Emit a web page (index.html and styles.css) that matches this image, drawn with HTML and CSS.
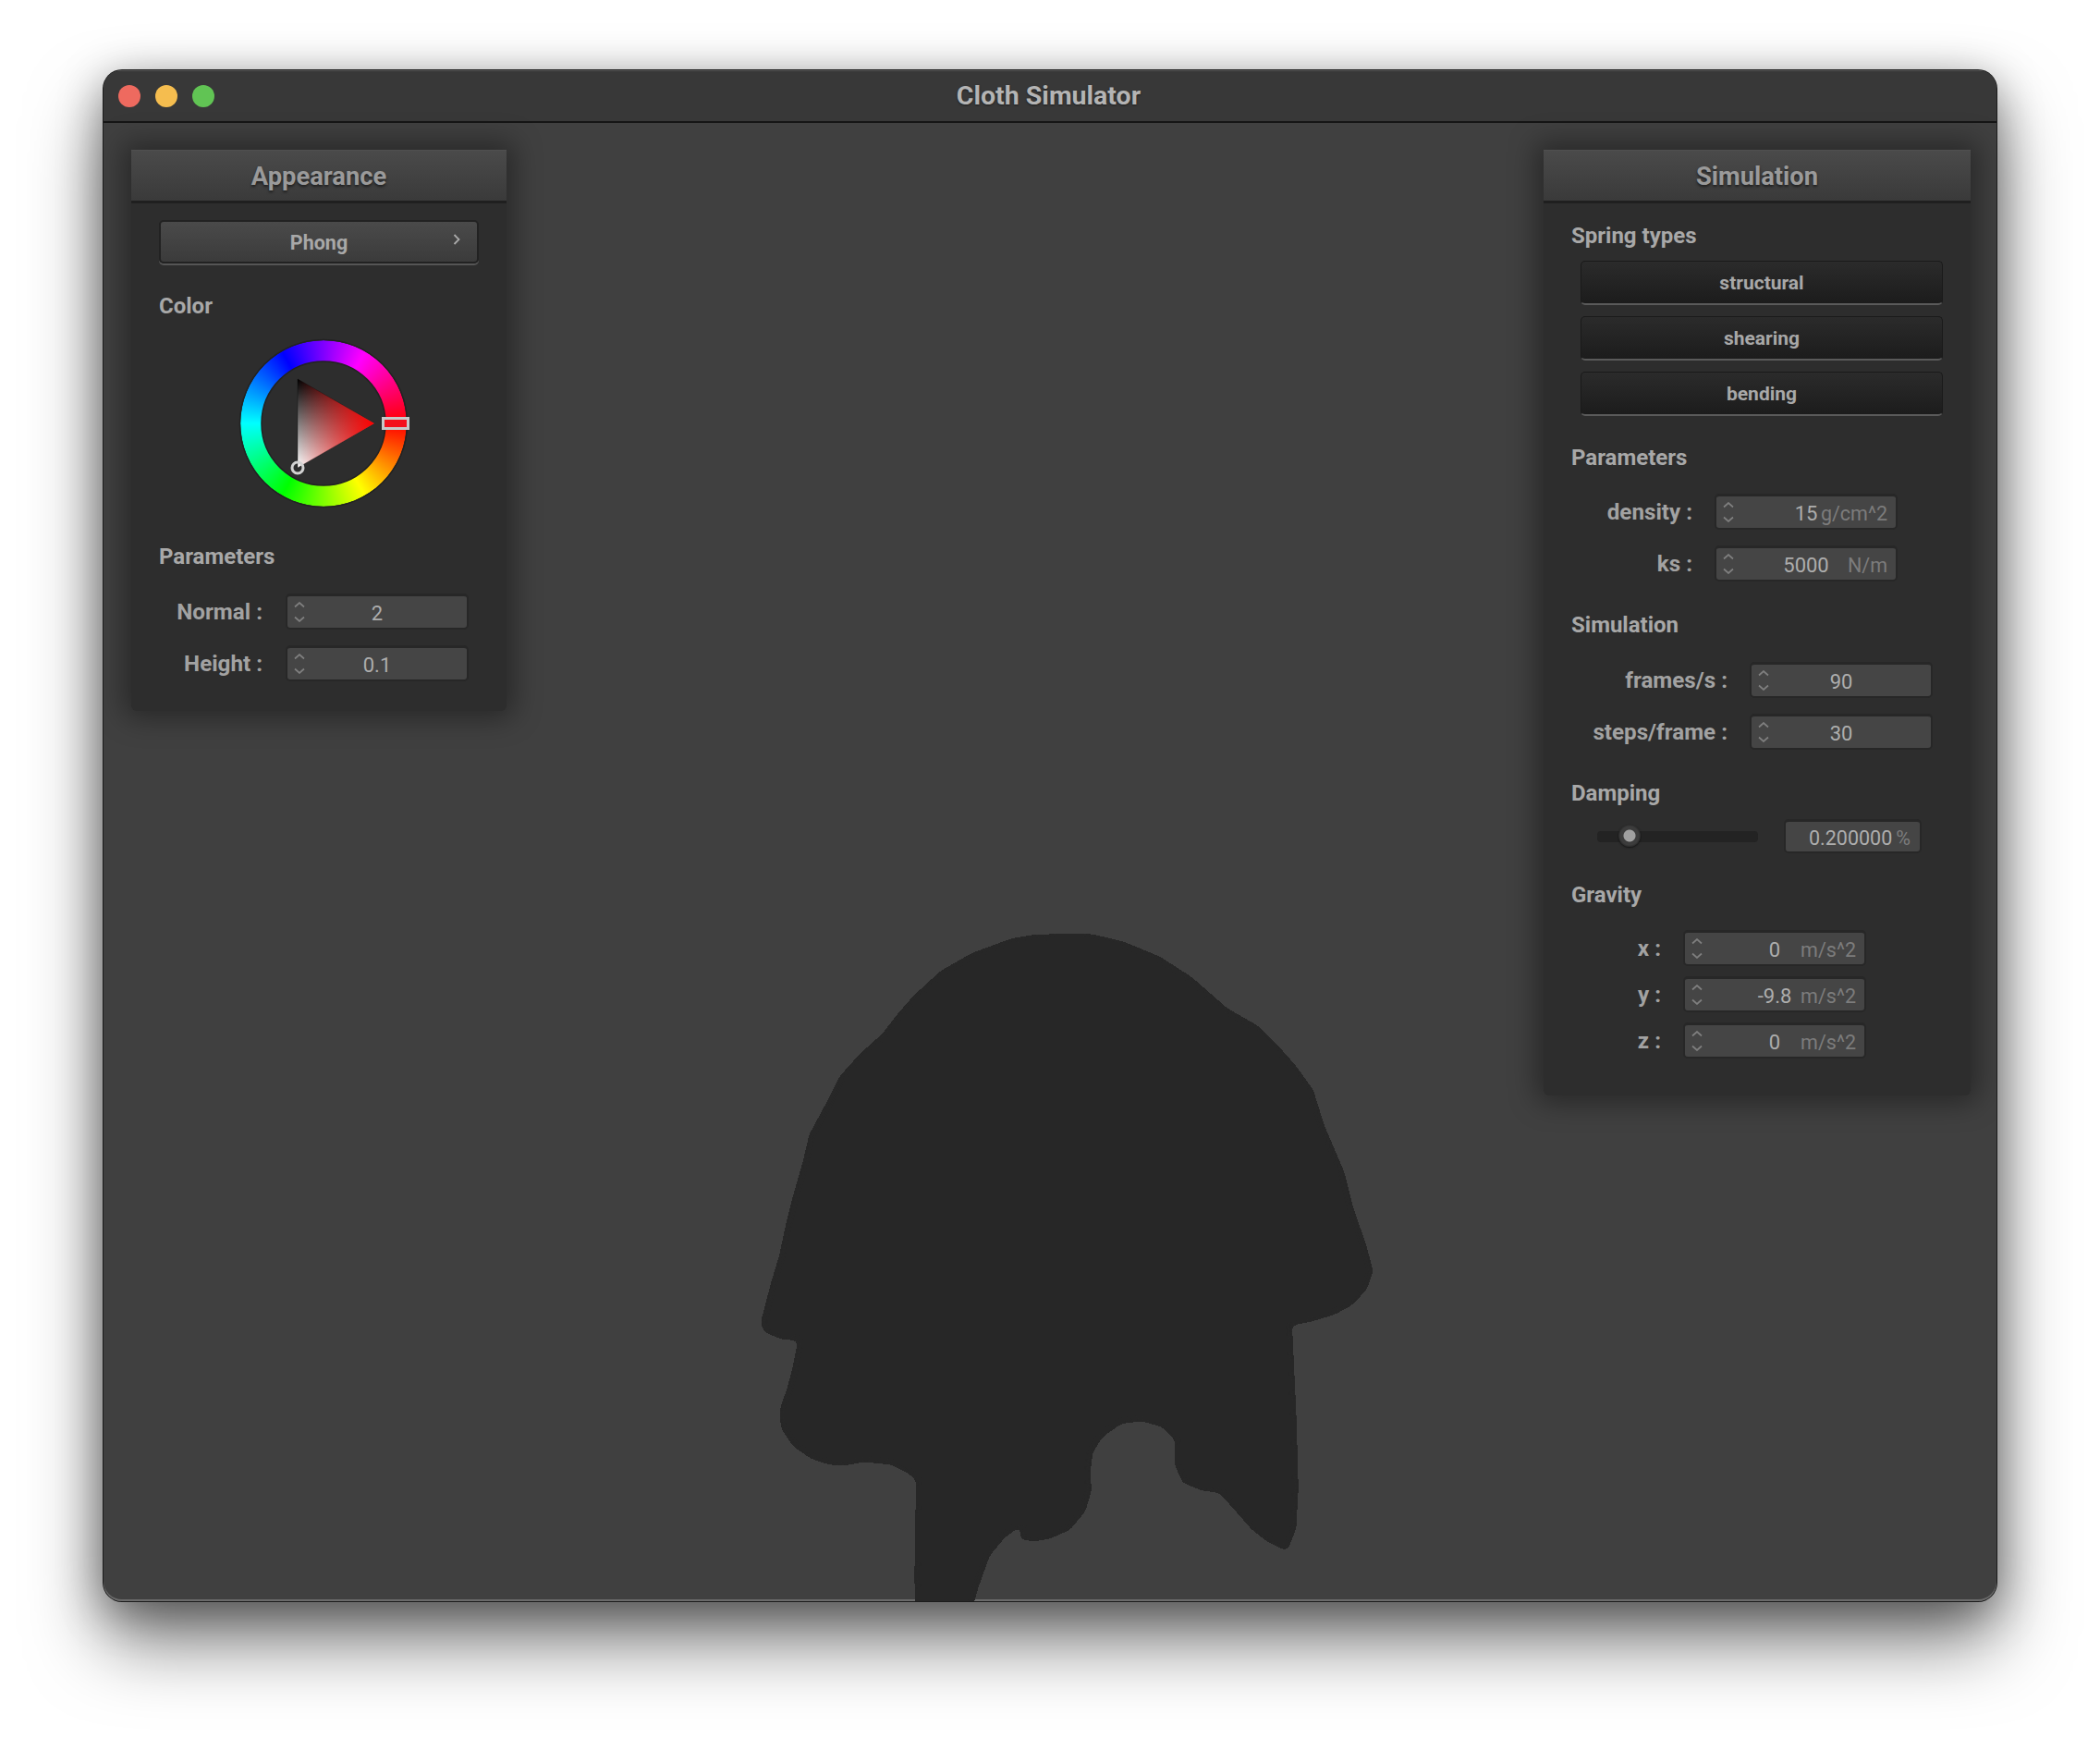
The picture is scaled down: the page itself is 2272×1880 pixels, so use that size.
FILE: index.html
```html
<!DOCTYPE html>
<html lang="en">
<head>
<meta charset="utf-8">
<title>Cloth Simulator</title>
<link rel="stylesheet" href="styles.css">
</head>
<body>
<svg class="defs" width="0" height="0" aria-hidden="true">
  <symbol id="spin" viewBox="0 0 12 22">
    <path d="M1 5.500 L6 1 L11 5.500 M1 16.500 L6 21 L11 16.500" fill="none" stroke="#7f7f7f" stroke-width="1.7"/>
  </symbol>
  <filter id="smooth" x="0" y="0" width="1" height="1" color-interpolation-filters="sRGB">
    <feGaussianBlur stdDeviation="7"/>
    <feComponentTransfer><feFuncA type="discrete" tableValues="0 1"/></feComponentTransfer>
  </filter>
</svg>
<main class="window">
  <header class="titlebar">
    <div class="lights">
      <span class="light red"></span>
      <span class="light yellow"></span>
      <span class="light green"></span>
    </div>
    <h1 class="app-title">Cloth Simulator</h1>
  </header>
  <div class="canvas">
    <svg class="cloth" viewBox="0 0 1568 1568" shape-rendering="crispEdges" aria-hidden="true">
      <path fill="#272727" filter="url(#smooth)" d="M760 62 L700 64 L650 72 L560 105 L490 145 L430 200 L395 240 L360 285 L310 330 L265 380 L232 445 L197 510 L183 570 L160 650 L145 710 L130 780 L112 840 L100 885 L88 932 L98 952 L135 967 L172 970 L160 1030 L148 1075 L131 1125 L134 1165 L160 1205 L200 1233 L240 1247 L280 1248 L320 1241 L380 1247 L420 1268 L436 1282 L433 1400 L432 1500 L435 1640 L540 1640 L575 1520 L600 1450 L635 1408 L670 1384 L668 1414 L700 1418 L735 1412 L780 1392 L814 1350 L827 1305 L825 1260 L830 1220 L852 1185 L895 1155 L940 1150 L985 1163 L1012 1190 L1012 1245 L1030 1287 L1075 1305 L1113 1310 L1185 1392 L1220 1419 L1264 1440 L1284 1390 L1289 1300 L1285 1150 L1275 936 L1320 927 L1370 912 L1410 890 L1442 855 L1456 815 L1440 755 L1412 675 L1392 595 L1347 490 L1322 410 L1282 355 L1242 310 L1200 268 L1130 228 L1050 158 L980 113 L900 80 L830 63 Z"/>
    </svg>

    <section class="panel panel-appearance">
      <h2 class="panel-title">Appearance</h2>
      <div class="panel-body body-appearance">
        <button class="combo">Phong
          <svg class="combo-arrow" viewBox="0 0 8 12" aria-hidden="true"><path d="M1.500 1 L6.500 6 L1.500 11" fill="none" stroke="#ababab" stroke-width="1.800"/></svg>
        </button>
        <h3 class="group-title gt-color">Color</h3>
        <div class="wheel">
          <div class="hue"></div>
          <svg class="wheel-marks" viewBox="0 0 180 180" aria-hidden="true">
            <defs>
              <linearGradient id="bw" x1="0" y1="0" x2="0" y2="1">
                <stop offset="0" stop-color="#000"/><stop offset="1" stop-color="#fff"/>
              </linearGradient>
              <linearGradient id="rd" x1="0" y1="0" x2="1" y2="0">
                <stop offset="0" stop-color="#ff0000" stop-opacity="0"/><stop offset="1" stop-color="#ff0000"/>
              </linearGradient>
            </defs>
            <circle cx="90" cy="90" r="90.500" fill="none" stroke="#222" stroke-width="1.500"/>
            <circle cx="90" cy="90" r="67" fill="none" stroke="#222" stroke-width="1.500"/>
            <path d="M62 42 L145 90 L62 138 Z" fill="url(#bw)" stroke="#000" stroke-opacity=".3"/>
            <path d="M62 42 L145 90 L62 138 Z" fill="url(#rd)"/>
            <rect x="154.500" y="84.500" width="27" height="11" fill="#f4101c" stroke="#c8c8c8" stroke-width="3"/>
            <circle cx="62" cy="138" r="6" fill="none" stroke="#d2d2d2" stroke-width="3"/>
          </svg>
        </div>
        <h3 class="group-title gt-app-params">Parameters</h3>
        <div class="rows rows-app">
          <div class="row"><span class="row-label">Normal :</span><div class="field"><svg class="spin"><use href="#spin"/></svg><span class="value">2</span></div></div>
          <div class="row"><span class="row-label">Height :</span><div class="field"><svg class="spin"><use href="#spin"/></svg><span class="value">0.1</span></div></div>
        </div>
      </div>
    </section>

    <section class="panel panel-simulation">
      <h2 class="panel-title">Simulation</h2>
      <div class="panel-body body-simulation">
        <h3 class="group-title">Spring types</h3>
        <div class="buttons">
          <button class="toggle">structural</button>
          <button class="toggle">shearing</button>
          <button class="toggle">bending</button>
        </div>
        <h3 class="group-title gt-params">Parameters</h3>
        <div class="rows rows-params">
          <div class="row"><span class="row-label">density :</span><div class="field"><svg class="spin"><use href="#spin"/></svg><span class="value">15</span><span class="unit">g/cm^2</span></div></div>
          <div class="row"><span class="row-label">ks :</span><div class="field"><svg class="spin"><use href="#spin"/></svg><span class="value">5000</span><span class="unit">N/m</span></div></div>
        </div>
        <h3 class="group-title gt-sim">Simulation</h3>
        <div class="rows rows-sim">
          <div class="row"><span class="row-label">frames/s :</span><div class="field"><svg class="spin"><use href="#spin"/></svg><span class="value">90</span></div></div>
          <div class="row"><span class="row-label">steps/frame :</span><div class="field"><svg class="spin"><use href="#spin"/></svg><span class="value">30</span></div></div>
        </div>
        <h3 class="group-title gt-damping">Damping</h3>
        <div class="damping">
          <div class="slider"><span class="knob"></span></div>
          <div class="readout"><span class="value">0.200000</span><span class="unit">%</span></div>
        </div>
        <h3 class="group-title gt-gravity">Gravity</h3>
        <div class="rows rows-gravity">
          <div class="row"><span class="row-label">x :</span><div class="field"><svg class="spin"><use href="#spin"/></svg><span class="value">0</span><span class="unit">m/s^2</span></div></div>
          <div class="row"><span class="row-label">y :</span><div class="field"><svg class="spin"><use href="#spin"/></svg><span class="value">-9.8</span><span class="unit">m/s^2</span></div></div>
          <div class="row"><span class="row-label">z :</span><div class="field"><svg class="spin"><use href="#spin"/></svg><span class="value">0</span><span class="unit">m/s^2</span></div></div>
        </div>
      </div>
    </section>
  </div>
</main>
</body>
</html>
```

FILE: styles.css
```css
* { box-sizing: border-box; }
html, body { margin: 0; padding: 0; }
body {
  background: #fff;
  font-family: Roboto, "Liberation Sans", sans-serif;
  overflow: hidden;
  height: 1880px;
}
.defs { position: absolute; }
h1, h2, h3 { margin: 0; }

.window {
  width: 2048px;
  height: 1656px;
  margin: 76px 0 0 112px;
  border-radius: 20px;
  background: #404040;
  overflow: hidden;
  box-shadow: 0 0 0 1px #1c1c1c, inset 0 -2px 0 #6a6a6a, 0 44px 80px rgba(0,0,0,.52), 0 10px 48px rgba(0,0,0,.38);
  display: flex;
  flex-direction: column;
}
.titlebar {
  height: 57px;
  flex: none;
  background: #383838;
  border-top: 1px solid #555;
  border-bottom: 2px solid #161616;
  display: flex;
  align-items: center;
  justify-content: center;
  position: relative;
}
.lights {
  position: absolute;
  left: 16px;
  top: 15px;
  display: flex;
  gap: 16px;
}
.light { width: 24px; height: 24px; border-radius: 50%; }
.red { background: #ee6a5f; }
.yellow { background: #f5bd4f; }
.green { background: #61c454; }
.app-title {
  font-size: 28.500px;
  line-height: 52px;
  margin-right: 3px;
  font-weight: 700;
  color: #b4b4b4;
  text-shadow: 0 1px 2px rgba(0,0,0,.5);
}

.canvas {
  flex: 1;
  position: relative;
  display: flex;
  justify-content: space-between;
  align-items: flex-start;
  padding: 29px 28px 0 30px;
}
.cloth {
  position: absolute;
  left: 668px;
  top: 847px;
  width: 760px;
  height: 760px;
}

.panel {
  position: relative;
  background: #2d2d2d;
  border-radius: 0 0 6px 6px;
  box-shadow: 0 0 30px 8px rgba(0,0,0,.38);
}
.panel-appearance { width: 406px; }
.panel-simulation { width: 462px; }
.panel-title {
  height: 58px;
  line-height: 56px;
  text-align: center;
  font-size: 27.300px;
  font-weight: 700;
  color: #9a9a9a;
  text-shadow: 0 2px 3px rgba(0,0,0,.55);
  background: linear-gradient(#4a4a4a, #3a3a3a);
  border-top: 1px solid #505050;
  border-bottom: 3px solid #1f1f1f;
}
.body-appearance { padding: 18px 30px 32px; }
.body-simulation { padding: 20px 30px 40px 30px; }

.group-title {
  height: 30px;
  line-height: 30px;
  font-size: 24px;
  font-weight: 700;
  color: #a8a8a8;
}
.gt-color { margin-top: 31px; }
.gt-app-params { margin-top: 39px; }
.gt-params { margin-top: 30px; }
.gt-sim { margin-top: 32px; }
.gt-damping { margin-top: 32px; }
.gt-gravity { margin-top: 30px; }

button {
  font-family: inherit;
  display: block;
  padding: 0;
}
.combo {
  position: relative;
  width: 346px;
  height: 47px;
  padding-top: 2px;
  font-size: 21.500px;
  font-weight: 700;
  color: #a8a8a8;
  background: linear-gradient(#4a4a4a, #3b3b3b);
  border: 2px solid #222;
  border-radius: 5px;
  box-shadow: 0 2px 0 #555;
}
.combo-arrow {
  position: absolute;
  right: 18px;
  top: 13px;
  width: 8px;
  height: 12px;
}

.wheel {
  position: relative;
  width: 180px;
  height: 180px;
  margin: 22px 0 0 88px;
}
.hue {
  position: absolute;
  inset: 0;
  border-radius: 50%;
  background: conic-gradient(from 90deg, #f00, #ff0, #0f0, #0ff, #00f, #f0f, #f00);
  -webkit-mask: radial-gradient(closest-side, transparent 66.500px, #000 67.500px);
  mask: radial-gradient(closest-side, transparent 66.500px, #000 67.500px);
}
.wheel-marks {
  position: absolute;
  inset: 0;
  overflow: visible;
}

.rows { display: flex; flex-direction: column; gap: 17px; }
.rows-app { margin-top: 25px; }
.rows-params { margin-top: 24px; }
.rows-sim { margin-top: 25px; }
.rows-gravity { margin-top: 23px; gap: 11px; }
.row { display: flex; align-items: center; }
.row-label {
  text-align: right;
  font-size: 24.200px;
  font-weight: 700;
  color: #a2a2a2;
  white-space: nowrap;
}
.rows-app .row-label { width: 112px; margin-right: 25px; }
.rows-params .row-label { width: 131px; margin-right: 24px; }
.rows-sim .row-label { width: 169px; margin-right: 24px; }
.rows-gravity .row-label { width: 97px; margin-right: 24px; }

.field {
  position: relative;
  width: 198px;
  height: 39px;
  display: grid;
  grid-template-columns: 1fr auto 1fr;
  align-items: center;
  background: #454545;
  border: 2px solid #272727;
  border-top-width: 3px;
  border-radius: 5px;
  padding: 0 8px;
}
.spin { width: 12px; height: 22px; margin-left: -1px; }
.value {
  font-size: 22px;
  line-height: 1;
  color: #adadad;
  padding-top: 4px;
}
.unit {
  justify-self: end;
  font-size: 21.500px;
  line-height: 1;
  color: #7c7c7c;
  padding-top: 4px;
  margin-right: 1px;
}

.buttons { display: flex; flex-direction: column; gap: 12px; margin: 12px 0 0 10px; }
.toggle {
  width: 392px;
  height: 48px;
  font-size: 21px;
  font-weight: 700;
  color: #a8a8a8;
  background: linear-gradient(#2b2b2b, #1c1c1c);
  border: 1px solid #1a1a1a;
  border-bottom: 2px solid #5a5a5a;
  border-radius: 5px;
}

.damping {
  display: flex;
  align-items: center;
  margin: 13px 0 0 28px;
}
.slider {
  position: relative;
  width: 174px;
  height: 12px;
  border-radius: 4px;
  background: #232323;
}
.knob {
  position: absolute;
  left: 23px;
  top: -7px;
  width: 24px;
  height: 24px;
  border-radius: 50%;
  background: radial-gradient(circle, #a0a0a0 0 6px, #3c3c3c 7px 10px, #2a2a2a 12px);
  box-shadow: 0 1px 2px rgba(0,0,0,.6);
}
.readout {
  width: 149px;
  height: 37px;
  margin-left: 28px;
  display: flex;
  align-items: center;
  justify-content: flex-end;
  gap: 4px;
  padding-right: 9px;
  background: #454545;
  border: 2px solid #272727;
  border-top-width: 3px;
  border-radius: 5px;
}
.readout .value { font-size: 21.500px; }
```
